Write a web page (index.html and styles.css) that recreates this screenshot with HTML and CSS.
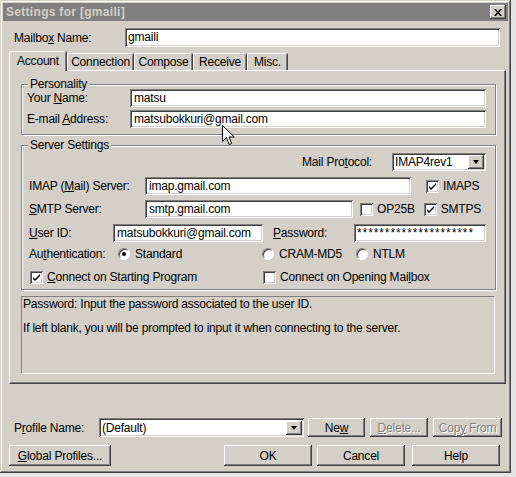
FILE: index.html
```html
<!DOCTYPE html>
<html>
<head>
    <link rel="stylesheet" href="styles.css">
</head>
<body>
    <div class="window">
        <div class="titlebar">
            <span class="title">Settings for [gmaili]</span>
            <span class="close-btn">
                <svg width="8" height="7" viewBox="0 0 8 7"><path d="M0 0h2l2 2.5L6 0h2L5 3.5 8 7H6L4 4.5 2 7H0l3-3.5z" fill="#000"/></svg>
            </span>
        </div>

        <div class="content">
            <div class="row mailbox-row">
                <span class="lbl mailbox-lbl">Mailbo<u>x</u> Name:</span>
                <div class="field mailbox-field">gmaili</div>
            </div>

            <div class="tabs">
                <div class="tab active tab-account">Account</div>
                <div class="tab tab-connection">Connection</div>
                <div class="tab tab-compose">Compose</div>
                <div class="tab tab-receive">Receive</div>
                <div class="tab tab-misc">Misc.</div>
            </div>

            <div class="panel">
                <fieldset class="group personality">
                    <legend>Personality</legend>
                    <div class="group-body">
                        <div class="row">
                            <span class="lbl p-lbl">Your <u>N</u>ame:</span>
                            <div class="field p-field">matsu</div>
                        </div>
                        <div class="row">
                            <span class="lbl p-lbl">E-mail <u>A</u>ddress:</span>
                            <div class="field p-field">matsubokkuri@gmail.com</div>
                        </div>
                    </div>
                </fieldset>

                <fieldset class="group server">
                    <legend>Server Settings</legend>
                    <div class="group-body">
                        <div class="row proto-row">
                            <span class="lbl proto-lbl">Mail Pro<u>t</u>ocol:</span>
                            <div class="field combo proto-combo">
                                <span class="combo-text">IMAP4rev1</span>
                                <span class="drop-btn"><span class="arrow"></span></span>
                            </div>
                        </div>
                        <div class="row srv-row">
                            <span class="lbl srv-lbl">IMAP (<u>M</u>ail) Server:</span>
                            <div class="field imap-field">imap.gmail.com</div>
                            <span class="check-item imaps"><span class="checkbox checked"><svg width="9" height="9" viewBox="0 0 9 9"><path d="M1 4l2 2 5-5v2L3 8 1 6z" fill="#000"/></svg></span>IMAPS</span>
                        </div>
                        <div class="row srv-row smtp-row">
                            <span class="lbl srv-lbl"><u>S</u>MTP Server:</span>
                            <div class="field smtp-field">smtp.gmail.com</div>
                            <span class="check-item op25b"><span class="checkbox"></span>OP25B</span>
                            <span class="check-item smtps"><span class="checkbox checked"><svg width="9" height="9" viewBox="0 0 9 9"><path d="M1 4l2 2 5-5v2L3 8 1 6z" fill="#000"/></svg></span>SMTPS</span>
                        </div>
                        <div class="row user-row">
                            <span class="lbl user-lbl"><u>U</u>ser ID:</span>
                            <div class="field user-field">matsubokkuri@gmail.com</div>
                            <span class="lbl pass-lbl"><u>P</u>assword:</span>
                            <div class="field pass-field">*********************</div>
                        </div>
                        <div class="row auth-row">
                            <span class="lbl auth-lbl">Au<u>t</u>hentication:</span>
                            <span class="radio-item std"><span class="radio on"></span>Standard</span>
                            <span class="radio-item cram"><span class="radio"></span>CRAM-MD5</span>
                            <span class="radio-item"><span class="radio"></span>NTLM</span>
                        </div>
                        <div class="row connect-row">
                            <span class="check-item start"><span class="checkbox checked"><svg width="9" height="9" viewBox="0 0 9 9"><path d="M1 4l2 2 5-5v2L3 8 1 6z" fill="#000"/></svg></span><u>C</u>onnect on Starting Program</span>
                            <span class="check-item"><span class="checkbox"></span>Connect on Opening Mai<u>l</u>box</span>
                        </div>
                    </div>
                </fieldset>

                <div class="help-box">
                    <p>Password: Input the password associated to the user ID.</p>
                    <p>If left blank, you will be prompted to input it when connecting to the server.</p>
                </div>
            </div>

            <div class="row profile-row">
                <span class="lbl profile-lbl">P<u>r</u>ofile Name:</span>
                <div class="field combo profile-combo">
                    <span class="combo-text">(Default)</span>
                    <span class="drop-btn"><span class="arrow"></span></span>
                </div>
                <button class="btn btn-new">Ne<u>w</u></button>
                <button class="btn btn-delete" disabled><u>D</u>elete...</button>
                <button class="btn btn-copy" disabled>Cop<u>y</u> From</button>
            </div>

            <div class="row bottom-row">
                <button class="btn btn-global"><u>G</u>lobal Profiles...</button>
                <button class="btn btn-ok">OK</button>
                <button class="btn btn-cancel">Cancel</button>
                <button class="btn btn-help">Help</button>
            </div>
        </div>

        <!-- mouse pointer -->
        <svg class="pointer" width="13" height="21" viewBox="0 0 13 21">
            <path d="M0.5 0.5V16.5L4.5 12.7L7.2 19.5L9.6 18.5L7 12H12.3Z" fill="#fff" stroke="#000" stroke-width="1"/>
        </svg>
    </div>
</body>
</html>
```

FILE: styles.css
```css
/* desktop + dialog frame */
body {
    margin: 0;
    background-color: #e4e4e4;
    font-family: "Liberation Sans", Arial, sans-serif;
    font-size: 12px;
    letter-spacing: -0.2px;
    color: #000;
}

.window {
    position: relative;
    width: 511px;
    height: 473px;
    box-sizing: border-box;
    padding: 3px;
    background-color: #d4d0c8;
    box-shadow: inset -1px -1px #404040, inset 1px 1px #d4d0c8,
                inset -2px -2px #808080, inset 2px 2px #fff;
    overflow: hidden;
}

.titlebar {
    height: 18px;
    background-color: #808080;
    display: flex;
    align-items: center;
    justify-content: space-between;
    padding: 0 2px 0 3px;
}

.title {
    color: #d4d0c8;
    font-weight: bold;
    font-size: 12px;
    letter-spacing: 0.3px;
}

.close-btn {
    width: 16px;
    height: 14px;
    box-sizing: border-box;
    background-color: #d4d0c8;
    display: flex;
    align-items: center;
    justify-content: center;
    box-shadow: inset -1px -1px #404040, inset 1px 1px #fff,
                inset -2px -2px #808080;
}

.content {
    padding: 7px 2px 0 6px;
}

.row {
    display: flex;
    align-items: center;
}

.lbl {
    white-space: nowrap;
    flex: none;
}

/* sunken edit box */
.field {
    height: 18px;
    box-sizing: border-box;
    background-color: #fff;
    padding: 0 4px;
    line-height: 18px;
    white-space: nowrap;
    overflow: hidden;
    flex: none;
    box-shadow: inset 1px 1px #808080, inset -1px -1px #fff,
                inset 2px 2px #404040, inset -2px -2px #d4d0c8;
}

.mailbox-row {
    height: 19px;
}
.mailbox-lbl {
    margin-left: 5px;
    width: 111px;
}
.mailbox-field {
    width: 375px;
    height: 19px;
    padding-left: 3px;
    line-height: 19px;
}

/* tabs */
.tabs {
    display: flex;
    align-items: flex-end;
    height: 19px;
    margin-top: 4px;
}

.tab {
    height: 17px;
    box-sizing: border-box;
    text-align: center;
    line-height: 17px;
    border-radius: 2px 2px 0 0;
    border-top: 1px solid #fff;
    border-left: 1px solid #fff;
    box-shadow: inset -1px 0 #808080, 1px 0 #404040;
    margin-right: 1px;
}

.tab.active {
    position: relative;
    z-index: 1;
    height: 20px;
    margin-bottom: -1px;
    line-height: 18px;
    background-color: #d4d0c8;
}

.tab-account { width: 57px; }
.tab-connection { width: 66px; }
.tab-compose { width: 58px; }
.tab-receive { width: 53px; }
.tab-misc { width: 40px; }

.panel {
    width: 497px;
    height: 314px;
    box-sizing: border-box;
    border: 1px solid;
    border-color: #fff #404040 #404040 #fff;
    box-shadow: inset -1px -1px #808080;
    padding: 6px 8px 0 11px;
}

/* etched group boxes */
.group {
    margin: 0;
    padding: 0;
    width: 475px;
    box-sizing: border-box;
    border: 1px solid #808080;
    box-shadow: inset 1px 1px #fff, 1px 1px #fff;
}

.group legend {
    margin-left: 6px;
    padding: 0 2px;
    line-height: 14px;
    background-color: #d4d0c8;
}

.personality .group-body {
    margin-top: -2px;
    padding: 0 8px 6px 5px;
    display: flex;
    flex-direction: column;
    gap: 3px;
}

.p-lbl { width: 103px; }
.p-field { width: 356px; }

.server {
    margin-top: 3px;
}

.server .group-body {
    margin-top: 1px;
    padding: 0 8px 4px 7px;
}

.proto-row {
    justify-content: flex-end;
    padding-right: 1px;
}
.proto-lbl { margin-right: 20px; }

.combo {
    display: flex;
    align-items: center;
    justify-content: space-between;
    padding: 0 2px 0 3px;
}

.proto-combo { width: 94px; }

.drop-btn {
    width: 16px;
    height: 14px;
    box-sizing: border-box;
    background-color: #d4d0c8;
    display: flex;
    align-items: center;
    justify-content: center;
    box-shadow: inset -1px -1px #404040, inset 1px 1px #fff,
                inset -2px -2px #808080;
}

.arrow {
    width: 0;
    height: 0;
    border-left: 3.5px solid transparent;
    border-right: 3.5px solid transparent;
    border-top: 4px solid #000;
}

.srv-row { margin-top: 6px; }
.smtp-row { margin-top: 5px; }
.srv-lbl { width: 116px; }
.imap-field { width: 266px; }
.smtp-field { width: 208px; }

.check-item {
    display: flex;
    align-items: center;
    white-space: nowrap;
}

.checkbox {
    width: 13px;
    height: 13px;
    box-sizing: border-box;
    background-color: #fff;
    margin-right: 4px;
    display: flex;
    align-items: center;
    justify-content: center;
    box-shadow: inset 1px 1px #808080, inset -1px -1px #fff,
                inset 2px 2px #404040, inset -2px -2px #d4d0c8;
}

.imaps { margin-left: 15px; }
.op25b { margin-left: 7px; }
.smtps { margin-left: 9px; }

.user-row { margin-top: 6px; }
.user-lbl { width: 84px; }
.user-field { width: 150px; }
.pass-lbl {
    margin-left: 10px;
    width: 81px;
}
.pass-field {
    width: 132px;
    letter-spacing: 0.9px;
    padding-left: 3px;
}

.auth-row {
    height: 16px;
    margin-top: 4px;
}
.auth-lbl { width: 89px; }

.radio-item {
    display: flex;
    align-items: center;
    white-space: nowrap;
}

.radio {
    width: 12px;
    height: 12px;
    box-sizing: border-box;
    border-radius: 50%;
    background-color: #fff;
    border: 1px solid;
    border-color: #808080 #fff #fff #808080;
    box-shadow: inset 1px 1px #404040;
    margin-right: 5px;
    display: flex;
    align-items: center;
    justify-content: center;
}

.radio.on::after {
    content: "";
    width: 4px;
    height: 4px;
    border-radius: 50%;
    background-color: #000;
}

.std { width: 144px; }
.cram { width: 94px; }

.connect-row {
    height: 16px;
    margin-top: 7px;
    padding-left: 1px;
}
.start { width: 233px; }

.help-box {
    width: 474px;
    height: 78px;
    box-sizing: border-box;
    margin-top: 6px;
    border: 1px solid;
    border-color: #808080 #fff #fff #808080;
    padding: 1px 1px;
}

.help-box p {
    margin: 0 0 12px 0;
    line-height: 12px;
}

/* bottom controls */
.profile-row {
    height: 19px;
    margin-top: 34px;
}
.profile-lbl {
    margin-left: 5px;
    width: 85px;
}
.profile-combo {
    width: 205px;
    height: 19px;
}

.btn {
    font-family: "Liberation Sans", Arial, sans-serif;
    font-size: 12px;
    letter-spacing: -0.2px;
    color: #000;
    background-color: #d4d0c8;
    border: none;
    padding: 0;
    height: 19px;
    flex: none;
    box-shadow: inset -1px -1px #404040, inset 1px 1px #fff,
                inset -2px -2px #808080;
}

.btn:disabled {
    color: #808080;
    text-shadow: 1px 1px #fff;
}

.btn-new { width: 57px; margin-left: 4px; }
.btn-delete { width: 58px; margin-left: 5px; }
.btn-copy { width: 69px; margin-left: 5px; }

.bottom-row {
    margin-top: 8px;
}
.bottom-row .btn {
    height: 21px;
}
.btn-global { width: 102px; }
.btn-ok { width: 88px; margin-left: 113px; }
.btn-cancel { width: 88px; margin-left: 5px; }
.btn-help { width: 88px; margin-left: 7px; }

.pointer {
    position: absolute;
    left: 222px;
    top: 125px;
}
```
